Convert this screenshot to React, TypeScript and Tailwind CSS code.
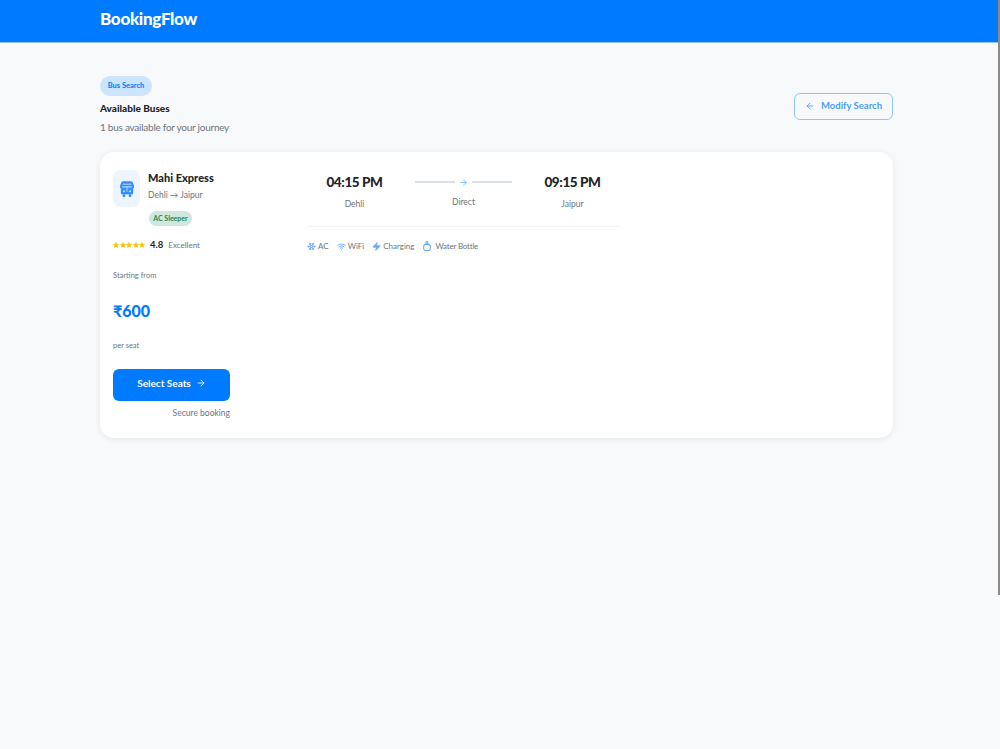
import { ArrowLeft, ArrowRight, Snowflake, Star, Wifi, Zap } from "lucide-react";

const amenities = [
  { label: "AC", icon: Snowflake },
  { label: "WiFi", icon: Wifi },
  { label: "Charging", icon: Zap },
];

function BottleIcon() {
  return (
    <svg viewBox="0 0 12 12" className="w-[10px] h-[10px] text-[#6ea8fe]" fill="none" stroke="currentColor" strokeWidth="1.3">
      <path d="M4.5 1h3M5 1v2.5M7 1v2.5" />
      <rect x="2" y="4" width="8" height="7.5" rx="2.5" />
    </svg>
  );
}

function BusIcon() {
  return (
    <svg viewBox="0 0 16 18" className="w-[14px] h-[16px] text-[#2f8fff]" fill="currentColor">
      <path d="M4 0h8a3 3 0 0 1 3 3v11a1 1 0 0 1-1 1H2a1 1 0 0 1-1-1V3a3 3 0 0 1 3-3z" />
      <rect x="0" y="4" width="1" height="4" />
      <rect x="15" y="4" width="1" height="4" />
      <rect x="3" y="15" width="3" height="3" rx="0.7" />
      <rect x="10" y="15" width="3" height="3" rx="0.7" />
      <rect x="3" y="3" width="10" height="1" fill="#cfe4ff" />
      <rect x="2.5" y="6" width="11" height="1.2" fill="#cfe4ff" />
      <rect x="7.5" y="7" width="1" height="5" fill="#cfe4ff" />
      <circle cx="4.5" cy="11.5" r="1.1" fill="#cfe4ff" />
      <circle cx="11.5" cy="11.5" r="1.1" fill="#cfe4ff" />
    </svg>
  );
}

export default function App() {
  return (
    <div className="relative min-h-[749px] bg-[#f8f9fa] font-['Lato','Liberation_Sans',sans-serif] overflow-hidden">
      <header className="h-[43px] bg-[#007bff] border-b border-[#8fc0f5] pl-[100px] flex items-center">
        <span className="text-[17px] font-black text-white tracking-[-0.3px] mb-[5px]">BookingFlow</span>
      </header>

      <main className="w-[793px] ml-[100px] pt-[33px]">
        <div className="flex items-center justify-between">
          <div>
            <span className="flex w-[52px] h-[20px] items-center justify-center rounded-full bg-[#cce5ff] text-[7.5px] font-bold text-[#007bff]">
              Bus Search
            </span>
            <h1 className="mt-[5px] text-[10px] leading-[14px] font-black text-[#212529]">Available Buses</h1>
            <p className="mt-[5px] text-[10px] leading-[14px] tracking-[-0.25px] text-[#6c757d]">1 bus available for your journey</p>
          </div>
          <button
            type="button"
            className="flex items-center justify-center gap-[6px] w-[99px] h-[27px] mt-[2px] rounded-[6px] border-[1.5px] border-[#8fc4ff] text-[9.5px] font-bold text-[#4d9dff]"
          >
            <ArrowLeft className="w-[10px] h-[10px]" />
            Modify Search
          </button>
        </div>

        <div className="mt-[18px] h-[286px] rounded-[14px] bg-white shadow-[0_1px_6px_rgba(0,0,0,0.08)] pl-[13px] pt-[17px] flex">
          <div className="w-[117px] shrink-0">
            <div className="flex gap-[8px]">
              <div className="flex w-[27px] h-[37px] mt-[1px] items-center justify-center rounded-[8px] bg-[#eef5ff] shrink-0">
                <BusIcon />
              </div>
              <div>
                <div className="text-[11px] leading-[18px] font-black text-[#212529] whitespace-nowrap">Mahi Express</div>
                <div className="mt-[1px] text-[8.5px] leading-[14px] text-[#6c757d] whitespace-nowrap">Dehli → Jaipur</div>
                <span className="mt-[9px] ml-[1px] flex w-[43px] h-[15px] items-center justify-center rounded-full bg-[#d1e7dd] text-[7px] font-bold text-[#198754]">
                  AC Sleeper
                </span>
              </div>
            </div>

            <div className="mt-[12px] flex items-center h-[14px]">
              <div className="flex gap-[0.5px]">
                {[0, 1, 2, 3, 4].map((i) => (
                  <Star key={i} className="w-[6px] h-[6px] fill-[#ffc107] text-[#ffc107]" />
                ))}
              </div>
              <span className="ml-[5px] text-[9.5px] font-bold text-[#212529]">4.8</span>
              <span className="ml-[5px] text-[8px] text-[#6c757d]">Excellent</span>
            </div>

            <p className="mt-[18px] text-[7.5px] leading-[12px] text-[#6c757d]">Starting from</p>
            <p className="mt-[17px] text-[16px] leading-[24px] font-black text-[#007bff]">₹600</p>
            <p className="mt-[17px] text-[7.5px] leading-[12px] text-[#6c757d]">per seat</p>

            <button
              type="button"
              className="mt-[17px] flex w-[117px] h-[32px] pb-[4px] items-center justify-center gap-[5px] rounded-[6px] bg-[#007bff] text-[10px] font-bold text-white"
            >
              Select Seats
              <ArrowRight className="w-[10px] h-[10px]" />
            </button>
            <p className="mt-[5px] text-right text-[8.5px] leading-[14px] text-[#6c757d]">Secure booking</p>
          </div>

          <div className="ml-[77px] w-[313px]">
            <div className="flex h-[58px] border-b border-[#f1f3f5]">
              <div className="w-[96px] text-center">
                <div className="text-[13.5px] leading-[26px] font-black tracking-[-0.4px] text-[#212529]">04:15 PM</div>
                <div className="mt-[2px] text-[8.5px] leading-[14px] text-[#6c757d]">Dehli</div>
              </div>
              <div className="w-[97px] text-center ml-[13px]">
                <div className="flex items-center h-[26px]">
                  <div className="h-[1.5px] w-[40px] bg-[#d8dfe8]" />
                  <ArrowRight className="mx-[4px] w-[9px] h-[9px] text-[#5aa5ff]" />
                  <div className="h-[1.5px] w-[40px] bg-[#d8dfe8]" />
                </div>
                <div className="mt-0 text-[8.5px] leading-[14px] text-[#6c757d]">Direct</div>
              </div>
              <div className="w-[96px] text-center ml-[13px]">
                <div className="text-[13.5px] leading-[26px] font-black tracking-[-0.4px] text-[#212529]">09:15 PM</div>
                <div className="mt-[2px] text-[8.5px] leading-[14px] text-[#6c757d]">Jaipur</div>
              </div>
            </div>
            <div className="mt-[13px] flex items-center gap-[8px] text-[8px] leading-[12px] text-[#6c757d]">
              {amenities.map(({ label, icon: Icon }) => (
                <span key={label} className="flex items-center gap-[2px]">
                  <Icon
                    className="w-[9px] h-[9px] text-[#6ea8fe]"
                    strokeWidth={2.5}
                    fill={label === "Charging" ? "currentColor" : "none"}
                  />
                  {label}
                </span>
              ))}
              <span className="flex items-center gap-[3px] tracking-[-0.2px]">
                <BottleIcon />
                Water Bottle
              </span>
            </div>
          </div>
        </div>
      </main>

      <div className="absolute right-0 top-0 h-[595px] w-[2px] bg-[#8a8a8a]" />
    </div>
  );
}
